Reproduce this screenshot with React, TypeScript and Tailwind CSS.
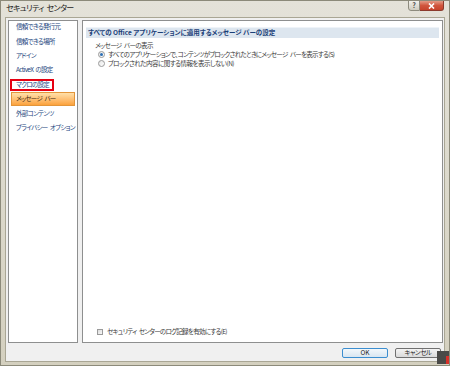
const navItems = [
  "信頼できる発行元",
  "信頼できる場所",
  "アドイン",
  "ActiveX の設定",
  "マクロの設定",
  "メッセージ バー",
  "外部コンテンツ",
  "プライバシー オプション",
];

function Radio({ checked }: { checked?: boolean }) {
  return (
    <span className="w-[7px] h-[7px] rounded-full border border-[#9a9a9a] bg-gradient-to-br from-[#e6e6e6] to-[#ffffff] flex items-center justify-center shrink-0">
      {checked && <span className="w-[3px] h-[3px] rounded-full bg-[#2c6fb5]" />}
    </span>
  );
}

export default function App() {
  return (
    <div className="relative w-[450px] h-[366px] overflow-hidden border border-[#8c8a7a] bg-gradient-to-b from-[#e4e2d9] to-[#d4d0bf] font-['Noto_Sans_CJK_JP','Noto_Sans',sans-serif] [font-feature-settings:'palt'] [word-spacing:1.5px] flex flex-col">
      {/* title bar */}
      <div className="h-[16px] shrink-0 flex items-start justify-between pl-[5px] pr-[5px]">
        <span className="text-[8px] leading-[14px] tracking-[-0.6px] text-[#1e1e1e]">セキュリティ センター</span>
        <div className="flex -mt-px">
          <div className="w-[12px] h-[11px] rounded-bl-[3px] border border-[#8d8b7e] bg-gradient-to-b from-[#f2f1ec] to-[#cfccbf] flex items-center justify-center text-[7px] leading-none text-[#444] font-bold">
            ?
          </div>
          <div className="w-[24px] h-[11px] rounded-br-[3px] border border-l-0 border-[#8b3a2c] bg-gradient-to-b from-[#e39a86] via-[#d0553d] to-[#c7432b] flex items-center justify-center">
            <svg width="7" height="6" viewBox="0 0 7 6">
              <path d="M1 0.5 L6 5.5 M6 0.5 L1 5.5" stroke="#ffffff" strokeWidth="1.6" />
            </svg>
          </div>
        </div>
      </div>

      {/* client area */}
      <div className="h-[345px] mx-[4px] border border-[#a9a694] bg-[#f0f0f0] flex flex-col pt-[2px] pl-[2px] pr-[1px]">
        <div className="flex gap-[4px] h-[323px] shrink-0">
          {/* nav */}
          <div className="w-[70px] shrink-0 bg-white border border-[#8e8f8f]">
            <div className="-mt-px flex flex-col">
              {navItems.map((item, i) => (
                <div
                  key={item}
                  className={
                    i === 5
                      ? "relative mx-[2px] h-[14.4px] flex items-center pl-[4px] border border-[#e3953a] bg-gradient-to-b from-[#ffe0a8] to-[#fba23a] text-[6.5px] tracking-[-0.7px] text-[#3b2a14] whitespace-nowrap"
                      : "relative mx-[2px] h-[14.4px] flex items-center pl-[4px] border border-transparent text-[6.5px] tracking-[-0.7px] text-[#24467e] whitespace-nowrap"
                  }
                >
                  {item}
                  {i === 4 && (
                    <span className="absolute left-[-2px] top-0 w-[44px] h-[12px] border-2 border-[#e60012]" />
                  )}
                </div>
              ))}
            </div>
          </div>

          {/* content */}
          <div className="flex-1 bg-white border border-[#8e8f8f] flex flex-col pt-[6px] px-[3px] pb-[6px]">
            <div className="h-[11px] bg-[#dde6ef] border-t border-[#eef3f8] flex items-center pl-[2px] text-[6.5px] font-bold text-[#1b3f78] whitespace-nowrap [word-spacing:0px]">
              すべての Office アプリケーションに適用するメッセージ バーの設定
            </div>
            <div className="mt-[4px] ml-[9px] h-[8px] flex items-center text-[6.5px] tracking-[-0.6px] text-[#3a3a3a] whitespace-nowrap">
              メッセージ バーの表示
            </div>
            <div className="ml-[12px] h-[9px] flex items-center gap-[3px] text-[6.5px] tracking-[-0.7px] text-[#3a3a3a] whitespace-nowrap">
              <Radio checked />
              すべてのアプリケーションで、コンテンツがブロックされたときにメッセージ バーを表示する(S)
            </div>
            <div className="ml-[12px] h-[9px] flex items-center gap-[3px] text-[6.5px] tracking-[-0.5px] text-[#3a3a3a] whitespace-nowrap">
              <Radio />
              ブロックされた内容に関する情報を表示しない(N)
            </div>
            <div className="mt-auto ml-[11px] h-[8px] flex items-center gap-[4px] text-[6.5px] tracking-[-0.7px] text-[#3a3a3a] whitespace-nowrap">
              <span className="w-[6px] h-[6px] border border-[#9a9a9a] bg-gradient-to-br from-[#dcdcdc] to-[#f8f8f8] shrink-0" />
              セキュリティ センターのログ記録を有効にする(E)
            </div>
          </div>
        </div>

        {/* buttons */}
        <div className="mt-[5px] flex justify-end gap-[7px] pr-[2px]">
          <div className="w-[46px] h-[10px] rounded-[2px] border border-[#3c8ed0] bg-gradient-to-b from-[#f4f8fb] to-[#d9e6f1] flex items-center justify-center text-[6.5px] text-[#222]">
            OK
          </div>
          <div className="w-[46px] h-[10px] rounded-[2px] border border-[#707070] bg-gradient-to-b from-[#f4f4f4] to-[#dadada] flex items-center justify-center text-[6.5px] tracking-[-0.5px] text-[#222]">
            キャンセル
          </div>
        </div>
      </div>

      {/* corner overlay */}
      <div className="absolute right-0 bottom-[1px] w-[12px] h-[13px] bg-[#4a4a48] flex justify-end items-end">
        <div className="w-[3px] h-[8px] bg-[#d8302a]" />
      </div>
    </div>
  );
}
